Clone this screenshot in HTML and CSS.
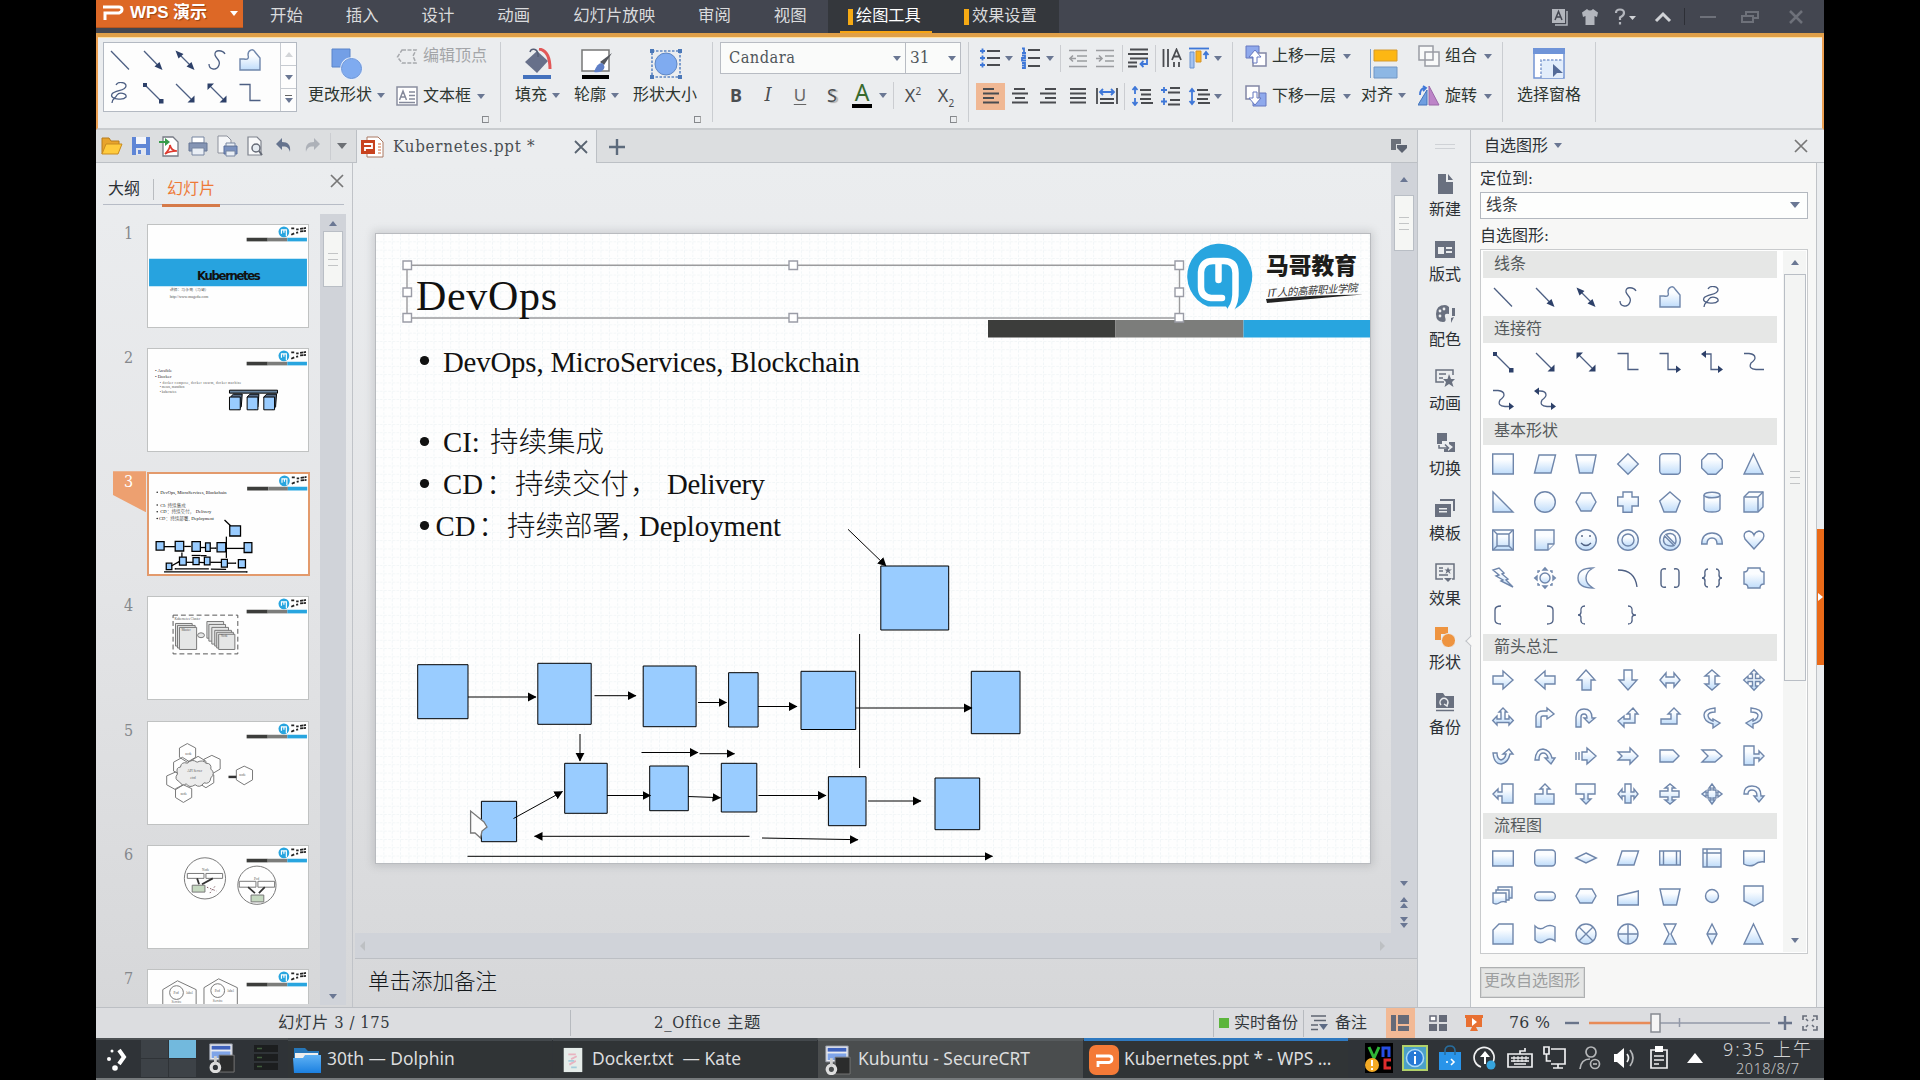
FILE: index.html
```html
<!DOCTYPE html>
<html lang="zh-CN">
<head>
<meta charset="utf-8">
<title>Kubernetes.ppt - WPS 演示</title>
<link rel="stylesheet" href="styles.css">
</head>
<body>
<svg class="defs" width="0" height="0">
  <defs>
    <linearGradient id="g" x1="0" y1="0" x2="0" y2="1"><stop offset=".3" stop-color="#fbfdff"/><stop offset="1" stop-color="#bfdcfa"/></linearGradient>
    <linearGradient id="folder" x1="0" y1="0" x2="0" y2="1"><stop offset="0" stop-color="#5fb2f5"/><stop offset="1" stop-color="#1b80e0"/></linearGradient>
    <marker id="ah" markerUnits="userSpaceOnUse" markerWidth="9" markerHeight="10" refX="8" refY="5" orient="auto"><path d="M0 .6L8.500 5L0 9.400Z" fill="#000" stroke="none"/></marker>
    <symbol id="line" viewBox="0 0 22 22"><path d="M2 2L20 20.500"/></symbol>
    <symbol id="arrow" viewBox="0 0 22 22"><path d="M2 2L18 18.500"/><path class="k" d="M20.500 21L12.500 17.500L17.500 13Z"/></symbol>
    <symbol id="darrow" viewBox="0 0 22 22"><path d="M4 4L18 18"/><path class="k" d="M20.500 21L12.500 17.500L17.500 13ZM1.500 1.500L9.500 5L4.500 9.500Z"/></symbol>
    <symbol id="curve" viewBox="0 0 22 22"><path d="M19 5C17 1 8 0 9 6C10 10 15 11 13 16C11 22 3 21 3 15"/></symbol>
    <symbol id="free" viewBox="0 0 22 22"><path class="f" d="M1 21V10H5C9 11 10 9 9 6C9 1 14 -1 16 3L21 9V21Z"/></symbol>
    <symbol id="scrib" viewBox="0 0 22 22"><path d="M7 3C9 -1 17 0 17 4C17 9 6 8 3 12C0 17 14 19 17 15C18 11 10 10 8 13C6 17 3 16 3 21"/></symbol>
    <symbol id="cline" viewBox="0 0 22 22"><path d="M3 3L19 19"/><path class="k" d="M1 1H5V5H1ZM17 17H21.500V21.500H17Z"/></symbol>
    <symbol id="carrow" viewBox="0 0 22 22"><path d="M2 2L18 18"/><path class="k" d="M20.500 20.500V13.500L13.500 20.500Z"/></symbol>
    <symbol id="cdarrow" viewBox="0 0 22 22"><path d="M3 3L18 18"/><path class="k" d="M20.500 20.500V13.500L13.500 20.500ZM1.500 1.500V8L8 1.500Z"/></symbol>
    <symbol id="elbow" viewBox="0 0 22 22"><path d="M.5 2.500H11V18.500H21.500"/></symbol>
    <symbol id="crt" viewBox="0 0 30 32"><path d="M3 1H27V18H3Z" fill="#e8eaf0" stroke="#8f94a0"/><path d="M5 3H25V7H5Z" fill="#3f62bd"/><path d="M5 9H25V16H5Z" fill="#7fa4e8"/><path d="M13 13H29V31H13Z" fill="#2b2c2c" stroke="#777"/><circle cx="9" cy="26" r="4.500" fill="none" stroke="#dedede" stroke-width="3.500"/><path d="M9 22V14" stroke="#cfcfcf" stroke-width="3"/></symbol>
    <symbol id="brand" viewBox="0 0 161 104"><circle cx="137.500" cy="7" r="5.500" fill="#28a5df"/><path d="M135 9V5H140V11.500M137.500 5.500V8" fill="none" stroke="#fff" stroke-width="1.200"/><path d="M145 3.500H148M150 4.500H152.500M154 4L160 3M145 10L148 8.500M150 8L152 7.500M154 6.500L160 6" stroke="#222" stroke-width="1.800" stroke-dasharray="3.500 .5"/><path d="M99.500 13H121V16.700H99.500Z" fill="#3c3d3b"/><path d="M121 13H141V16.700H121Z" fill="#7c7d7b"/><path d="M141 13H161V16.700H141Z" fill="#28a5df"/></symbol>
  </defs>
</svg>

<div class="app">
  <header class="titlebar">
    <div class="logo"><svg width="22" height="18" viewBox="0 0 22 18"><path d="M1 3H17Q20 3 20 5.500T17 9H3V16" fill="none" stroke="#fff" stroke-width="3"/></svg><b>WPS 演示</b><i class="dd white"></i></div>
    <nav class="menu"><span>开始</span><span>插入</span><span>设计</span><span>动画</span><span>幻灯片放映</span><span>审阅</span><span>视图</span></nav>
    <div class="context"><span class="on">绘图工具</span><span>效果设置</span></div>
    <div class="wintools">
      <svg width="18" height="18" viewBox="0 0 18 18"><path d="M1 1H14V15H1Z" fill="#b3b6bd"/><path d="M16 3V17H4" fill="none" stroke="#b3b6bd" stroke-width="1.500"/><path d="M4 12L7.500 3.500L11 12M5.300 9H9.700" fill="none" stroke="#434650" stroke-width="1.500"/></svg>
      <svg width="18" height="18" viewBox="0 0 18 18"><path d="M6 1Q9 4 12 1L17 4.500L16 9L13.500 8V17H4.500V8L2 9L1 4.500Z" fill="#b3b6bd"/></svg>
      <svg width="22" height="18" viewBox="0 0 22 18"><path d="M2 5Q2 1.500 6 1.500T10 5Q10 7.500 6 9.500V12M6 14V16.500" fill="none" stroke="#b3b6bd" stroke-width="2.200"/><path d="M15 8H22L18.500 12Z" fill="#d0d2d6"/></svg>
      <svg width="18" height="12" viewBox="0 0 18 12"><path d="M2 10L9 3L16 10" fill="none" stroke="#d0d2d6" stroke-width="3"/></svg>
      <i class="tsep"></i>
      <svg width="18" height="12" viewBox="0 0 18 12"><path d="M1 6H17" stroke="#6e717a" stroke-width="2"/></svg>
      <svg width="18" height="14" viewBox="0 0 18 14"><path d="M5 5V2H17V8H13M1 6H12V12H1Z" fill="none" stroke="#6e717a" stroke-width="2"/></svg>
      <svg width="16" height="14" viewBox="0 0 16 14"><path d="M2 1L14 13M14 1L2 13" stroke="#6e717a" stroke-width="2.500"/></svg>
    </div>
  </header>

  <section class="ribbon">
    <div class="group g1">
      <div class="gallery">
        <div class="cells">
          <svg class="ln"><use href="#line"/></svg><svg class="ln"><use href="#arrow"/></svg><svg class="ln"><use href="#darrow"/></svg><svg class="ln"><use href="#curve"/></svg><svg class="ln"><use href="#free"/></svg>
          <svg class="ln"><use href="#scrib"/></svg><svg class="ln"><use href="#cline"/></svg><svg class="ln"><use href="#carrow"/></svg><svg class="ln"><use href="#cdarrow"/></svg><svg class="ln"><use href="#elbow"/></svg>
        </div>
        <div class="spin"><span><i class="up pale"></i></span><span><i class="dd"></i></span><span><u></u><i class="dd"></i></span></div>
      </div>
      <div class="big change">
        <svg width="32" height="32" viewBox="0 0 32 32"><path d="M1 1H19V19H1Z" fill="#739fe6" stroke="#5a84c9"/><circle cx="20.500" cy="20.500" r="10.500" fill="#7fabf0" stroke="#e7effc" stroke-width="1.500"/><circle cx="20.500" cy="20.500" r="10" fill="none" stroke="#6691d6"/></svg>
        <div class="lbl">更改形状<i class="dd"></i></div>
      </div>
      <div class="stack s1">
        <div class="row off"><svg width="22" height="18" viewBox="0 0 22 18"><path d="M6 3H20L17 9L20 16H6L1.500 10Z" fill="none" stroke="#a7a9ad" stroke-width="1.500" stroke-dasharray="4 1.500"/></svg><span>编辑顶点</span></div>
        <div class="row"><svg width="22" height="20" viewBox="0 0 22 20"><path d="M1 1H21V19H1Z" fill="#fff" stroke="#8b8fa0" stroke-width="1.500"/><path d="M3.500 14L7 5L10.500 14M5 11H9M13 6H19M13 9.500H19M3 16.500H19M13 13H19" fill="none" stroke="#858a9b" stroke-width="1.500"/></svg><span>文本框</span><i class="dd"></i></div>
      </div>
      <i class="launch"></i>
    </div>
    <div class="group g2">
      <div class="big fill">
        <svg width="32" height="32" viewBox="0 0 32 32"><path d="M4 14L16 3L27 13L16 25Z" fill="#67708a"/><path d="M9 4C10 0 16 0 17 6V9" fill="none" stroke="#555e75" stroke-width="1.500"/><path d="M18 1C25 2 29 8 29 21" fill="none" stroke="#e25757" stroke-width="3"/><path d="M2 27H30V31H2Z" fill="#4472bd"/></svg>
        <div class="lbl">填充<i class="dd"></i></div>
      </div>
      <div class="big">
        <svg width="32" height="32" viewBox="0 0 32 32"><path d="M2 2H29V23H2Z" fill="#fff" stroke="#777" stroke-width="1.500"/><path d="M32 5L24 17L20 14Z" fill="#53565d"/><path d="M14 24Q17 15 22 15Q27 19 22 23Q18 25 14 24" fill="#5f7fc6"/><path d="M2 27H29V31H2Z" fill="#000"/></svg>
        <div class="lbl">轮廓<i class="dd"></i></div>
      </div>
      <div class="big size">
        <svg width="34" height="32" viewBox="0 0 34 32"><path d="M3 3H31V29H3Z" fill="none" stroke="#5f87c4" stroke-width="1.600" stroke-dasharray="2.500 1.500"/><circle cx="17" cy="16" r="11" fill="#7fabf0" stroke="#5f87c4"/><path d="M1 1H5V5H1ZM29 1H33V5H29ZM1 27H5V31H1ZM29 27H33V31H29Z" fill="#4b78b8"/></svg>
        <div class="lbl">形状大小</div>
      </div>
      <i class="launch"></i>
    </div>
    <div class="group g3">
      <div class="font">
        <div class="combo"><span class="name">Candara</span><i class="dd"></i><span class="pt">31</span><i class="dd"></i></div>
        <div class="marks">
          <b>B</b><em>I</em><u>U</u><span class="shadow">S</span><span class="color">A</span><i class="dd"></i><i class="vs"></i><span>X<sup>2</sup></span><span>X<sub>2</sub></span>
        </div>
      </div>
      <i class="launch"></i>
    </div>
    <div class="group g4">
      <div class="para p1">
        <svg width="20" height="20" viewBox="0 0 20 20"><path d="M7 3H20M7 10H20M7 17H20" class="tx"/><path d="M0 3H5M2.500 .5V5.500M0 10H5M2.500 7.500V12.500M0 17H5M2.500 14.500V19.500" class="bl"/></svg>
        <i class="dd"></i>
        <svg width="20" height="22" viewBox="0 0 20 22"><path d="M7 3H19M7 11H19M7 19H19" class="tx"/><path d="M1 1.500H3V6M1 6H5M1 8.500H4V11H1V13.500H5M1 16H4V21H1M1 18.500H4" class="bl"/></svg>
        <i class="dd"></i><i class="vs"></i>
        <svg width="18" height="19" viewBox="0 0 18 19"><path d="M0 1.500H18M8 7H18M8 12H18M0 17.500H18" class="gr"/><path d="M7 9.500H1M4 6.500L1 9.500L4 12.500" class="gr"/></svg>
        <svg width="18" height="19" viewBox="0 0 18 19"><path d="M0 1.500H18M9 7H18M9 12H18M0 17.500H18" class="gr"/><path d="M0 9.500H6M3 6.500L6 9.500L3 12.500" class="gr"/></svg>
        <i class="vs"></i>
        <svg width="20" height="20" viewBox="0 0 20 20"><path d="M2 1.500H20M0 6H20M2 10.500H20M0 14.500H9M0 18.500H9" class="tx"/><path d="M19 11V16H13M15.500 13L12.500 16L15.500 19" class="bl"/></svg>
        <i class="vs"></i>
        <svg width="20" height="20" viewBox="0 0 20 20"><path d="M1.500 1V19M6 1V19M12 14V19M17 14V19" class="tx"/><path d="M10 12L14.500 1.500L19 12M11.500 8.500H17.500" class="tx"/></svg>
        <svg width="22" height="22" viewBox="0 0 22 22"><path d="M1 1.500H21" class="bl"/><path d="M2 5H6V21H2Z" fill="#a5c3ef" stroke="#6b93cf"/><path d="M8 4H13V15H8Z" fill="#f9b320" stroke="#d5932a"/><path d="M18 12V5M15.500 8L18 5L20.500 8" class="bl"/></svg>
        <i class="dd"></i>
      </div>
      <div class="para p2">
        <span class="sel"><svg width="18" height="18" viewBox="0 0 18 18"><path d="M1 2H12M1 6.500H17M1 11H12M1 15.500H17" class="tx"/></svg></span>
        <svg width="18" height="18" viewBox="0 0 18 18"><path d="M3 2H14M1 6.500H17M4 11H14M1 15.500H17" class="tx"/></svg>
        <svg width="18" height="18" viewBox="0 0 18 18"><path d="M6 2H17M1 6.500H17M6 11H17M1 15.500H17" class="tx"/></svg>
        <svg width="18" height="18" viewBox="0 0 18 18"><path d="M1 2H17M1 6.500H17M1 11H17M1 15.500H17" class="tx"/></svg>
        <svg width="22" height="18" viewBox="0 0 22 18"><path d="M1 1V17M21 1V17M4 12H18M4 16H18" class="tx"/><path d="M4 5H18M7 2L4 5L7 8M15 2L18 5L15 8" class="bl"/></svg>
        <i class="vs"></i>
        <svg width="22" height="20" viewBox="0 0 22 20"><path d="M9 4H20M10 8.500H20M9 13H20M10 17H22" class="tx"/><path d="M4 1V8M1.500 4L4 1L6.500 4M4 12V19M1.500 16L4 19L6.500 16" class="bl"/></svg>
        <svg width="22" height="20" viewBox="0 0 22 20"><path d="M10 2H20M8 6.500H20M10 14H20M8 18.500H20" class="tx"/><path d="M1 4H7M4 1V7M1 15.500H7M4 12V19" class="bl"/></svg>
        <svg width="22" height="20" viewBox="0 0 22 20"><path d="M9 4H20M10 8.500H22M9 13H20M10 17H22" class="tx"/><path d="M4 3V18M1.500 6L4 3L6.500 6M1.500 15L4 18L6.500 15" class="bl"/></svg>
        <i class="dd"></i>
      </div>
    </div>
    <div class="group g5">
      <div class="stack s5">
        <div class="row"><svg width="22" height="22" viewBox="0 0 22 22"><path d="M1 1H14V13H1Z" fill="#8fa9ec" stroke="#6679c0"/><path d="M8 8H21V21H8Z" fill="#fff" stroke="#8287a5" stroke-width="1.500"/><path d="M8 18V12H4L10 5L16 12H12V18Z" fill="#fff" stroke="#6679c0"/></svg><span>上移一层</span><i class="dd"></i></div>
        <div class="row"><svg width="22" height="22" viewBox="0 0 22 22"><path d="M8 8H21V21H8Z" fill="#8fa9ec" stroke="#6679c0"/><path d="M1 1H14V14H1Z" fill="#fff" stroke="#8287a5" stroke-width="1.500"/><path d="M8 7V13H4L10 20L16 13H12V7Z" fill="#fff" stroke="#6679c0"/></svg><span>下移一层</span><i class="dd"></i></div>
      </div>
      <div class="big align">
        <svg width="30" height="32" viewBox="0 0 30 32"><path d="M1.500 1V30" stroke="#7ba0ce"/><path d="M5 2H28V13H5Z" fill="#fdb713" stroke="#d49a31"/><path d="M5 19H28V30H5Z" fill="#8db7e4" stroke="#7096c5"/></svg>
        <div class="lbl">对齐<i class="dd"></i></div>
      </div>
      <div class="stack s6">
        <div class="row"><svg width="22" height="22" viewBox="0 0 22 22"><path d="M1 1H15V15H1ZM7 7H21V21H7Z" fill="#fff" fill-opacity=".7" stroke="#999ca4" stroke-width="1.500"/></svg><span>组合</span><i class="dd"></i></div>
        <div class="row"><svg width="22" height="22" viewBox="0 0 22 22"><path d="M0 20H9V5Z" fill="#6f9ee0" stroke="#4475bb"/><path d="M11 20V1L21 20Z" fill="#bd84c8" stroke="#9b69a8"/><path d="M2 10Q2 3 7 3M5 1L8 3L5 6" class="bl"/></svg><span>旋转</span><i class="dd"></i></div>
      </div>
    </div>
    <div class="group g6">
      <div class="big pane">
        <svg width="32" height="32" viewBox="0 0 32 32"><path d="M1 1H31V30H1Z" fill="#fff" stroke="#7394d4" stroke-width="1.500"/><path d="M0 0H32V6H0Z" fill="#6f94d8"/><path d="M8 12H30V30H8Z" fill="#e2edfb"/><path d="M8 30V12H30" fill="none" stroke="#7f9bd0" stroke-width="1.500" stroke-dasharray="2.500 1.500"/><path d="M20 16V29L24 25H30Z" fill="#546b98"/></svg>
        <div class="lbl">选择窗格</div>
      </div>
    </div>
  </section>

  <div class="main">
    <div class="left-main">
      <div class="tabrow">
        <div class="qat">
          <svg width="22" height="20" viewBox="0 0 22 20"><path d="M1 18V2H8L10 5H18V8" fill="#e8a42c" stroke="#b77c1c"/><path d="M1 18L5 8H21L17 18Z" fill="#ffcb3d" stroke="#c98b20"/></svg>
          <svg width="20" height="20" viewBox="0 0 20 20"><path d="M1 1H19V19H1Z" fill="#5f86d6"/><path d="M5 1H15V8H5Z" fill="#f4f6fb"/><path d="M5 12H15V19H5Z" fill="#e2e6ef"/><path d="M7 14H10V18H7Z" fill="#5f86d6"/></svg>
          <svg width="20" height="22" viewBox="0 0 20 22"><path d="M4 2H14L19 7V21H4Z" fill="#fff" stroke="#777b85" stroke-width="1.300"/><path d="M0 6H6V3L11 7L6 11V8H0Z" fill="#369a49"/><path d="M6 19C10 15 11 13 11 10C12 15 15 16 18 16C13 16 9 17 6 19" fill="none" stroke="#de3b30" stroke-width="1.700"/></svg>
          <svg width="20" height="20" viewBox="0 0 20 20"><path d="M4 1H16V7H4Z" fill="#fff" stroke="#7785a0"/><path d="M1 7H19V15H1Z" fill="#8595b4" stroke="#667795"/><path d="M4 12H16V19H4Z" fill="#e9eef5" stroke="#7785a0"/></svg>
          <svg width="22" height="22" viewBox="0 0 22 22"><path d="M2 1H11L15 5V18H2Z" fill="#f5f6f8" stroke="#8d919c"/><path d="M8 11H21V19H8Z" fill="#7990be" stroke="#586f9c"/><path d="M10 8H19V11H10ZM10 16H19V21H10Z" fill="#e9eef5" stroke="#7785a0"/></svg>
          <svg width="20" height="22" viewBox="0 0 20 22"><path d="M3 2H12L16 6V20H3Z" fill="#f8f9fa" stroke="#7f838d" stroke-width="1.200"/><circle cx="11" cy="13" r="4" fill="#e6ecf2" stroke="#666b77" stroke-width="1.500"/><path d="M14 16L17 20" stroke="#666b77" stroke-width="2"/></svg>
          <svg width="16" height="16" viewBox="0 0 16 16"><path d="M6 0V4C12 4 15 7 14 14C13 10 11 8 6 8.500V12L0 6Z" fill="#65738e"/></svg>
          <svg width="16" height="16" viewBox="0 0 16 16"><path d="M10 0V4C4 4 1 7 2 14C3 10 5 8 10 8.500V12L16 6Z" fill="#adb1b8"/></svg>
          <i class="vs"></i><i class="dd gray"></i>
        </div>
        <div class="doctab">
          <svg width="23" height="22" viewBox="0 0 23 22"><path d="M6 1H17L22 6V21H6Z" fill="#fff" stroke="#aa7962"/><path d="M17 8H20M17 11H20M17 14H20M17 17H20" stroke="#cf6c40"/><path d="M0 4H14V18H0Z" fill="#c8421e"/><path d="M3 8H11V12H4V15" fill="none" stroke="#fff" stroke-width="1.800"/></svg>
          <span>Kubernetes.ppt *</span>
          <svg width="14" height="14" viewBox="0 0 14 14"><path d="M1 1L13 13M13 1L1 13" stroke="#596471" stroke-width="1.800"/></svg>
        </div>
        <svg class="plus" width="18" height="18" viewBox="0 0 18 18"><path d="M9 1V17M1 9H17" stroke="#5d6b7c" stroke-width="2.400"/></svg>
        <svg class="tablist" width="18" height="16" viewBox="0 0 18 16"><path d="M1 1H11V6H6V12H1Z" fill="#6b7079"/><path d="M7 7H17V10L12 15L7 10Z" fill="#5c6370"/></svg>
      </div>
      <div class="work">
        <aside class="slides">
          <div class="stabs"><span>大纲</span><i></i><span class="on">幻灯片</span><svg width="14" height="14" viewBox="0 0 14 14"><path d="M1 1L13 13M13 1L1 13" stroke="#777" stroke-width="1.700"/></svg></div>
          <div class="sbody">
            <ol class="thumbs">
              <li><span>1</span><svg class="th" viewBox="0 0 161 104"><use href="#brand"/><path d="M0 34.500H161V62.500H0Z" fill="#27a3df"/><text x="49" y="56.500" class="kt" textLength="65">Kubernetes</text><text x="21" y="67.500" class="t4">讲师：马永亮（马哥）</text><text x="21" y="74" class="t4">http://www.magedu.com</text></svg></li>
              <li><span>2</span><svg class="th" viewBox="0 0 161 104"><use href="#brand"/><text x="6" y="23" class="t5">• Ansible</text><text x="6" y="30" class="t5">• Docker</text><text x="11" y="35.500" class="t3" textLength="83">• docker compose, docker swarm, docker machine</text><text x="11" y="39.500" class="t3">• mesos, marathon</text><text x="11" y="45" class="t3">• kubernetes</text><path d="M82 42H131V45H82Z" fill="#68849f" stroke="#000"/><path d="M83 49L86 46H95L94 59L91 62ZM100 49L103 46H112L111 59L108 62ZM117 49L120 46H130L129 59L126 62Z" fill="#566b85" stroke="#000"/><path d="M82 49H93V62H82ZM100 49H111V62H100ZM117 49H128V62H117Z" fill="#99ccff" stroke="#000"/></svg></li>
              <li class="cur"><span>3</span><svg class="th" viewBox="376 234 994 629"><svg x="376" y="234" width="994" height="642" viewBox="0 0 161 104"><use href="#brand"/></svg><use href="#copy" y="-12"/><use href="#diagram" y="-6" stroke-width="8"/></svg></li>
              <li><span>4</span><svg class="th" viewBox="0 0 161 104"><use href="#brand"/><path d="M24.500 18.500H90.500V58H24.500Z" fill="none" stroke="#555" stroke-dasharray="5 3"/><g fill="#e5e6e6" stroke="#777"><path d="M27 27H44V50H27Z"/><path d="M29 29H47V52H29Z"/><path d="M31 31H48.500V53.500H31Z"/><path d="M59 25H76V42H59Z"/><path d="M61 28H78V45H61Z"/><path d="M64 31H81V48H64Z"/><path d="M67 34H84V50H67Z"/><path d="M69 36H86V52H69Z"/><path d="M71 38H87.500V53.500H71Z"/><ellipse cx="53" cy="39" rx="3.500" ry="2.500"/></g><text x="26" y="23.500" class="t3">Kubernetes Cluster</text><text x="33" y="35" class="t3">Master</text><text x="73" y="41" class="t3">Node</text></svg></li>
              <li><span>5</span><svg class="th" viewBox="0 0 161 104"><use href="#brand"/><g fill="#fff" stroke="#777"><path d="M39 22L47.500 26.500V36L39 41L31 36V26.500ZM64 34L72.500 38V48L64 53L56 48V38ZM34 36L42 41V50L34 55L25 50V41ZM27 51L35 55V64L27 69L18 64V55ZM59 50L66 54V62L58 67L50 62ZM35 64L43.500 68V77L35 82L27 77V68ZM97 45L105.500 49V59L97 64L89 59V49ZM50 35L58 40V46H42V40Z"/><path fill="#ececec" d="M31 61Q25 58 29 53Q27 46 32 46Q33 40 39 42Q44 37 49 41Q55 38 58 42Q64 42 63 48Q68 52 63 57Q62 64 56 62Q52 68 47 64Q41 68 38 63Q34 66 31 61Z"/></g><path d="M81 56H89" stroke="#333" stroke-width="2.500"/><text x="39" y="51" class="t3">API Server</text><text x="42" y="58" class="t3">etcd</text><text x="37" y="33.500" class="t3">node</text><text x="32" y="74" class="t3">node</text><text x="92" y="55" class="t3">node</text></svg></li>
              <li><span>6</span><svg class="th" viewBox="0 0 161 104"><use href="#brand"/><g fill="none" stroke="#777"><circle cx="57" cy="33" r="21"/><circle cx="110" cy="40" r="19.500"/><path d="M39 28H56V33H39ZM58 28H75V33H58ZM92 36H109V42H92ZM111 36H128V42H111Z"/><path fill="#c5d8c0" d="M44 40H57V47H44ZM104 50H117V57H104Z"/></g><path d="M49 33L51 39M65 33L54 39M101 42L108 48M118 42L112 48" stroke="#333" stroke-width="1.800"/><path d="M59 42L69 46M62 48L68 40" stroke="#7c5560" stroke-dasharray="1.500 2"/><text x="54" y="25" class="t3">Node</text><text x="107" y="35" class="t3">Pod</text></svg></li>
              <li><span>7</span><svg class="th" viewBox="0 0 161 104"><use href="#brand"/><g fill="none" stroke="#777"><path d="M14 60V20L29 11L48 20V60ZM56 60V18L71 9L90 18V60Z"/><circle cx="28" cy="23" r="7"/><circle cx="70" cy="21" r="7"/></g><text x="25" y="24" class="t3">Pod</text><text x="67" y="22" class="t3">Pod</text><text x="38" y="24" class="t3">label</text><text x="80" y="22" class="t3">label</text><text x="23" y="34" class="t3">Service</text><text x="65" y="33" class="t3">Service</text></svg></li>
            </ol>
            <div class="vbar sb1"><i class="up"></i><b class="thumb"><u></u></b><i class="dd"></i></div>
          </div>
        </aside>
        <section class="editor">
          <div class="canvas">
            <div class="stage">
              <svg class="slide" width="994" height="629" viewBox="376 234 994 629">
                <defs><pattern id="grid" x="376" y="234" width="8.350" height="8.300" patternUnits="userSpaceOnUse"><path d="M8 0V8.300M0 8H8.350" stroke="#edf2f5" stroke-width=".8" stroke-dasharray="2.500 1.500"/></pattern></defs>
                <rect x="376" y="234" width="994" height="629" fill="#fefefe"/><rect x="376" y="234" width="994" height="629" fill="url(#grid)"/>
                <path d="M988 320H1115.500V337.500H988Z" fill="#3c3d3b"/><path d="M1115.500 320H1243.500V337.500H1115.500Z" fill="#7c7d7b"/><path d="M1243.500 320H1370V337.500H1243.500Z" fill="#28a5df"/>
                <path d="M1208 306.500A32.500 32.500 0 1 1 1251 285Q1247 305 1229.500 311.500L1226 306.500Z" fill="#28a5df"/>
                <path d="M1222 298H1211Q1201 297 1201 287V272Q1202 261 1213 261H1224Q1235.500 261 1235.500 273V290Q1236 302 1231 309" fill="none" stroke="#fff" stroke-width="6.500" stroke-linecap="round"/><path d="M1218.500 262V280" stroke="#fff" stroke-width="6.500" stroke-linecap="round"/>
                <text x="1266" y="273.500" class="mage" textLength="91">马哥教育</text>
                <text x="1267" y="297" class="slogan" textLength="91" transform="rotate(-3.500 1267 297)">IT 人的高薪职业学院</text>
                <path d="M1266 299Q1310 295 1363 294.500Q1320 298 1267 303Z" fill="#222"/>
                <path d="M407 265.200H1179.500V318H407Z" fill="none" stroke="#9b9b9d" stroke-width="1.400"/>
                <g fill="#fff" stroke="#9a9ca6" stroke-width="1.400"><path d="M403 261H411.500V269.500H403ZM789 261H797.500V269.500H789ZM1175 261H1183.500V269.500H1175ZM403 288H411.500V296.500H403ZM1175 288H1183.500V296.500H1175ZM403 313.500H411.500V322H403ZM789 313.500H797.500V322H789ZM1175 313.500H1183.500V322H1175Z"/></g>
                <text x="416" y="309.500" class="title" textLength="141">DevOps</text>
                <g id="copy" class="copy">
                  <g><circle cx="424.500" cy="360.500" r="4.600"/><circle cx="424.500" cy="441.500" r="4.600"/><circle cx="424.500" cy="483.500" r="4.600"/><circle cx="424.500" cy="525.500" r="4.600"/></g>
                  <text x="443" y="372" textLength="417">DevOps, MicroServices, Blockchain</text>
                  <text y="452"><tspan x="443">CI:</tspan> <tspan x="490" class="zh">持续集成</tspan></text>
                  <text y="494"><tspan x="443">CD</tspan><tspan x="486" class="zh">：</tspan><tspan x="515" class="zh">持续交付</tspan><tspan x="630" class="zh">，</tspan> <tspan x="667" textLength="98">Delivery</tspan></text>
                  <text y="536"><tspan x="435.500">CD</tspan><tspan x="478" class="zh">：</tspan><tspan x="507" class="zh">持续部署</tspan><tspan x="622">, </tspan><tspan x="639" textLength="142">Deployment</tspan></text>
                </g>
                <g id="diagram">
                  <g fill="#99ccff" stroke="#000"><path d="M417.700 664.700H468V718.700H417.700ZM537.800 663.300H591.200V724.300H537.800ZM643.200 666H696.100V726.700H643.200ZM728.600 672.700H758.100V727H728.600ZM801 671.300H855.700V729.500H801ZM971.300 671.300H1020V733.700H971.300ZM880.800 566H948.700V630H880.800ZM564.700 763.300H607.200V813.300H564.700ZM649.700 766H688.300V810.700H649.700ZM721.300 763.300H756.800V812H721.300ZM828.400 776.700H866V825.700H828.400ZM935 778H979.700V829.700H935ZM481.400 801.300H516.600V841.700H481.400Z"/></g>
                  <path d="M859.600 634V768" stroke="#000"/>
                  <g fill="none" stroke="#000"><path marker-end="url(#ah)" d="M468 697H536"/><path marker-end="url(#ah)" d="M594.500 695.700H636"/><path marker-end="url(#ah)" d="M698 702.500H726.500"/><path marker-end="url(#ah)" d="M758 706.500H797"/><path marker-end="url(#ah)" d="M856 708H972"/><path marker-end="url(#ah)" d="M580 734V761"/><path marker-end="url(#ah)" d="M641.500 752.500H698"/><path marker-end="url(#ah)" d="M699.500 753.700H734.500"/><path marker-end="url(#ah)" d="M607 795.500H650.500"/><path marker-end="url(#ah)" d="M688 796.500L720.500 797.700"/><path marker-end="url(#ah)" d="M758.500 795.500H826"/><path marker-end="url(#ah)" d="M868 801H921"/><path marker-end="url(#ah)" d="M513.500 818.500L562.500 791.500"/><path marker-end="url(#ah)" d="M749.500 836.300H534.500"/><path marker-end="url(#ah)" d="M762 838L858 839.700"/><path marker-end="url(#ah)" d="M467.500 856.300H992.500"/><path marker-end="url(#ah)" d="M848 529.300L886 566"/></g>
                </g>
                <path d="M470.600 811V833H475L480.500 838L482 831L487 827L484 822Z" fill="#fdfdfd" stroke="#777" stroke-width="1.300"/>
              </svg>
            </div>
            <div class="vbar sb2"><i class="up"></i><b class="thumb"><u></u></b><i class="dd"></i><svg width="10" height="12" viewBox="0 0 10 12"><path d="M1 5L5 0L9 5ZM1 11L5 6L9 11Z" fill="#6a7793"/></svg><svg width="10" height="12" viewBox="0 0 10 12"><path d="M1 0L5 5L9 0ZM1 6L5 11L9 6Z" fill="#6a7793"/></svg></div>
          </div>
          <div class="hbar"><i class="lt"></i><i class="rt"></i></div>
          <div class="notes">单击添加备注</div>
        </section>
      </div>
    </div>

    <nav class="strip">
      <i class="grip"></i>
      <div><svg viewBox="0 0 20 20"><path d="M3 0H11V8H18V20H3ZM13 0L18 6H13Z"/></svg>新建</div>
      <div><svg viewBox="0 0 20 20"><path d="M0 2H20V19H0ZM3 8V15H9V8ZM11 8V10H17V8ZM11 12V14H17V12Z" fill-rule="evenodd"/></svg>版式</div>
      <div><svg viewBox="0 0 20 20"><path d="M10 1Q1 1 1 10Q1 18 8 18Q12 18 10 13Q9 9 14 10L14 3Q12 1 10 1Z"/><path d="M17 4H20V12H17ZM16 14L19 13L16 19Z"/><g fill="#ebedef"><circle cx="5" cy="7" r="1.400"/><circle cx="9" cy="5" r="1.400"/><circle cx="5" cy="12" r="1.400"/></g></svg>配色</div>
      <div><svg viewBox="0 0 20 20"><path d="M9 14H1V2H18V7M4 6H11M4 10H8" fill="none" stroke="#69707f" stroke-width="1.500"/><path d="M14 6L16 11H20L17 14L18.500 19L14 16L9.500 19L11 14L8 11H12.500Z"/></svg>动画</div>
      <div><svg viewBox="0 0 20 20"><path d="M2 0H12V8H7V11H2Z"/><path d="M14 9H20V19H9V16H13V18L18 14L14 11Z"/><path d="M4 12V15H13M10 11.500L13.500 15L10 18" fill="none" stroke="#69707f" stroke-width="1.500"/></svg>切换</div>
      <div><svg viewBox="0 0 20 20"><path d="M5 1H20V13H18V3H5ZM0 6H16V19H0ZM4 10V11.500H12V10ZM4 13V14.500H12V13Z" fill-rule="evenodd"/></svg>模板</div>
      <div><svg viewBox="0 0 20 20"><path d="M8 16H1V1H19V16H17M4 5H8M4 8H8M4 12H13" fill="none" stroke="#69707f" stroke-width="1.500"/><path d="M13 4L14 6.500H17L14.500 8L15.500 11L13 9L10.500 11L11.500 8L9.500 6.500H12ZM9 15H17L13 19Z"/></svg>效果</div>
      <div class="hot"><svg viewBox="0 0 20 20"><path d="M0 0H13V7H6V13H0Z"/><circle cx="13.500" cy="13.500" r="7" stroke="#ebedef"/></svg>形状</div>
      <div><svg viewBox="0 0 20 20"><path d="M1 1H8L10 4H19V16H1Z"/><path d="M1 18.500H19" stroke="#69707f" stroke-width="1.500"/><path d="M6 13A4 4 0 1 1 12 13M9 12L12 14L13 10" fill="none" stroke="#ebedef" stroke-width="1.500"/></svg>备份</div>
      <b class="notch"></b>
    </nav>

    <aside class="panel">
      <div class="phead"><span>自选图形</span><i class="dd"></i><svg width="14" height="14" viewBox="0 0 14 14"><path d="M1 1L13 13M13 1L1 13" stroke="#777" stroke-width="1.700"/></svg></div>
      <div class="pwrap">
        <div class="pbody">
          <label>定位到:</label>
          <div class="select">线条<i class="dd"></i></div>
          <label>自选图形:</label>
          <div class="list">
            <div class="cats">
              <h4>线条</h4>
              <div class="shapes"><svg class="ln"><use href="#line"/></svg><svg class="ln"><use href="#arrow"/></svg><svg class="ln"><use href="#darrow"/></svg><svg class="ln"><use href="#curve"/></svg><svg class="ln"><use href="#free"/></svg><svg class="ln"><use href="#scrib"/></svg></div>
              <h4>连接符</h4>
              <div class="shapes"><svg class="ln"><use href="#cline"/></svg><svg class="ln"><use href="#carrow"/></svg><svg class="ln"><use href="#cdarrow"/></svg><svg class="ln"><use href="#elbow"/></svg>
                <svg class="ln" viewBox="0 0 22 22"><path d="M.5 2.500H9V18.500H18"/><path class="k" d="M17 14.500L22 18.500L17 22Z"/></svg>
                <svg class="ln" viewBox="0 0 22 22"><path d="M3 3H10V18.500H18"/><path class="k" d="M17 14.500L22 18.500L17 22ZM5 -.5L0 3L5 7Z"/></svg>
                <svg class="ln" viewBox="0 0 22 22"><path d="M1 2.500H6Q12 3 12 7Q12 9 8 12Q5 18 13 18.500H21"/></svg>
                <svg class="ln" viewBox="0 0 22 22"><path d="M1 2.500H6Q12 3 12 7Q12 9 8 12Q5 18 13 18.500H18"/><path class="k" d="M17 14.500L22 18.500L17 22Z"/></svg>
                <svg class="ln" viewBox="0 0 22 22"><path d="M3 3H6Q12 3 12 7Q12 9 8 12Q5 18 13 18.500H18"/><path class="k" d="M17 14.500L22 18.500L17 22ZM5 -.5L0 3L5 7Z"/></svg></div>
              <h4>基本形状</h4>
              <div class="shapes">
                <svg class="sh"><path d="M.7 1H21.300V21H.7Z"/></svg>
                <svg class="sh"><path d="M5 2H21.500L17 20H.5Z"/></svg>
                <svg class="sh"><path d="M1 2H21L17.500 20H4.500Z"/></svg>
                <svg class="sh"><path d="M11 .7L21.300 11L11 21.300L.7 11Z"/></svg>
                <svg class="sh"><rect x=".7" y=".7" width="20.600" height="20.600" rx="3.500"/></svg>
                <svg class="sh"><path d="M7 .7H15L21.300 7V15L15 21.300H7L.7 15V7Z"/></svg>
                <svg class="sh"><path d="M10.500 1L20 21H1Z"/></svg>
                <svg class="sh"><path d="M1 1V21H21Z"/></svg>
                <svg class="sh"><circle cx="11" cy="11" r="10.300"/></svg>
                <svg class="sh"><path d="M6 2H16L21 11L16 20H6L1 11Z"/></svg>
                <svg class="sh"><path d="M6 1H15V6H21.300V15H15V21.300H6V15H.7V6H6Z"/></svg>
                <svg class="sh"><path d="M11 1L21.300 10L17 21H5L.7 10Z"/></svg>
                <svg class="sh"><path d="M3 4V18Q3 21 11 21T19 18V4"/><ellipse cx="11" cy="4" rx="8" ry="2.800"/></svg>
                <svg class="sh"><path d="M1 6L6 1H20V16L15 21H1Z"/><path d="M1 6H15V21M15 6L20 1"/></svg>
                <svg class="sh"><path d="M.7 1H21.300V21H.7Z"/><path d="M5 5H17V17H5ZM1 1L5 5M21 1L17 5M1 21L5 17M21 21L17 17"/></svg>
                <svg class="sh"><path d="M1 1H20V15L14 21H1Z"/><path d="M14 21V15H20"/></svg>
                <svg class="sh"><circle cx="11" cy="11" r="10.300"/><path d="M7 6V8M15 6V8M6 14Q11 19 16 14" class="n"/></svg>
                <svg class="sh"><circle cx="11" cy="11" r="10.300"/><circle cx="11" cy="11" r="6"/></svg>
                <svg class="sh"><circle cx="11" cy="11" r="10.300"/><path d="M7 5.500Q13 3 16 7Q18 12 16 15ZM5.500 7Q3 12 6.500 15.500Q11 18 15 16.500Z"/></svg>
                <svg class="sh"><path d="M.7 15Q1 4 11 4T21.300 15H16Q16 9 11 9T6 15Z"/></svg>
                <svg class="sh"><path d="M11 20L2 10Q-1 3 6 2Q10 3 11 6Q12 3 16 2Q23 3 20 10Z"/></svg>
                <svg class="sh"><path d="M7 1L12 6L10 7L16 12L14 13L21 20L9 14L11 13L4 9L7 8L1 3Z"/></svg>
                <svg class="sh"><circle cx="11" cy="11" r="5"/><path d="M9 3L11 .7L13 3ZM9 19L11 21.300L13 19ZM3 9L.7 11L3 13ZM19 9L21.300 11L19 13ZM4 6V4H6M16 4H18V6M18 16V18H16M6 18H4V16"/></svg>
                <svg class="sh"><path d="M18 1Q3 1 3 11T18 21Q11 17 11 11T18 1Z"/></svg>
                <svg class="ln" viewBox="0 0 22 22"><path d="M1 3Q18 3 20 20"/></svg>
                <svg class="sh"><path class="n" d="M7 2Q2 1 2 5V17Q2 21 7 20M15 2Q20 1 20 5V17Q20 21 15 20"/></svg>
                <svg class="sh"><path class="n" d="M7 2Q3 2 4 8Q4 11 1 11Q4 11 4 14Q3 20 7 20M15 2Q19 2 18 8Q18 11 21 11Q18 11 18 14Q19 20 15 20"/></svg>
                <svg class="sh"><path d="M5 1H17Q17 5 21 5V17Q17 17 17 21H5Q5 17 1 17V5Q5 5 5 1Z"/></svg>
                <svg class="ln" viewBox="0 0 22 22"><path d="M9 2Q3 2 3 6V16Q3 20 9 20"/></svg>
                <svg class="ln" viewBox="0 0 22 22"><path d="M13 2Q19 2 19 6V16Q19 20 13 20"/></svg>
                <svg class="ln" viewBox="0 0 22 22"><path d="M10 2Q5 2 6 8Q6 11 3 11Q6 11 6 14Q5 20 10 20"/></svg>
                <svg class="ln" viewBox="0 0 22 22"><path d="M11 2Q16 2 15 8Q15 11 19 11Q15 11 15 14Q16 20 11 20"/></svg>
              </div>
              <h4>箭头总汇</h4>
              <div class="shapes">
                <svg class="sh"><path d="M1 7H11V2L21 11L11 20V15H1Z"/></svg>
                <svg class="sh"><path d="M21 7H11V2L1 11L11 20V15H21Z"/></svg>
                <svg class="sh"><path d="M7 21V11H2L11 1L20 11H16V21Z"/></svg>
                <svg class="sh"><path d="M7 1V11H2L11 21L20 11H15V1Z"/></svg>
                <svg class="sh"><path d="M1 11L7 4V8H15V4L21 11L15 18V14H7V18Z"/></svg>
                <svg class="sh"><path d="M11 1L18 7H14V15H18L11 21L4 15H8V7H4Z"/></svg>
                <svg class="sh"><path d="M11 .7L15 5H12.500V9.500H17V7L21.300 11L17 15V12.500H12.500V17H15L11 21.300L7 17H9.500V12.500H5V15L.7 11L5 7V9.500H9.500V5H7Z"/></svg>
                <svg class="sh"><path d="M11 1L15 5H13V12H17V9L21.300 13.500L17 18V15.500H5V18L.7 13.500L5 9V12H9V5H7Z"/></svg>
                <svg class="sh"><path d="M2 20V9Q3 4 9 4H13V1L20 7L13 12V9H9Q7 9 7 11V20Z"/></svg>
                <svg class="sh"><path d="M1 20V10Q2 2 9 2Q17 2 17 11H20L14 16L9 11H12Q12 7 9 7Q6 7 6 10V20Z"/></svg>
                <svg class="sh"><path d="M16 1L21 7H18V16H7V20L1 14L7 9V12H13V7H10Z"/></svg>
                <svg class="sh"><path d="M15 1L21 7H18V17H2V12H12V7H9Z"/></svg>
                <svg class="sh"><path d="M14 1Q3 2 3 8Q3 15 12 17V21L19 16L12 12V14Q7 12 7 8Q8 5 14 5Z"/></svg>
                <svg class="sh"><path d="M8 1Q19 2 19 8Q19 15 10 17V21L3 16L10 12V14Q15 12 15 8Q14 5 8 5Z"/></svg>
                <svg class="sh"><path d="M1 8Q2 19 9 19Q16 18 18 9H21L17 4L11 9H14Q13 14 9 15Q5 14 5 8Z"/></svg>
                <svg class="sh"><path d="M1 15Q2 4 9 4Q16 5 18 13H21L17 19L11 13H14Q13 8 9 8Q5 8 5 15Z"/></svg>
                <svg class="sh"><path d="M7 7H12V3L21 11L12 19V15H7ZM1 7V15M4 7V15"/></svg>
                <svg class="sh"><path d="M1 7H13V3L21 11L13 19V15H1L5 11Z"/></svg>
                <svg class="sh"><path d="M1 5H14L20 11L14 17H1Z"/></svg>
                <svg class="sh"><path d="M1 5H14L21 11L14 17H1L7 11Z"/></svg>
                <svg class="sh"><path d="M1 1H11V9H16V6L21 11L16 16V13H11V20H1Z"/></svg>
                <svg class="sh"><path d="M21 1H10V9H6V6L1 11L6 16V13H10V20H21Z"/></svg>
                <svg class="sh"><path d="M1 21V11H9V6H6L11 1L16 6H13V11H20V21Z"/></svg>
                <svg class="sh"><path d="M1 1H20V11H13V16H16L11 21L6 16H9V11H1Z"/></svg>
                <svg class="sh"><path d="M8 1H14V9H17V6L21 11L17 16V13H14V20H8V13H5V16L1 11L5 6V9H8Z"/></svg>
                <svg class="sh"><path d="M1 8H9V5H6L11 1L16 5H13V8H20V14H13V17H16L11 21L6 17H9V14H1Z"/></svg>
                <svg class="sh"><path d="M11 1L14 5H12V7H15V10H17V8L21 11L17 14V12H15V15H12V17H14L11 21L8 17H10V15H7V12H5V14L1 11L5 8V10H7V7H10V5H8Z"/></svg>
                <svg class="sh"><path d="M1 11Q1 3 9 3Q18 3 18 13H21L16 19L11 13H14Q14 7 9 7Q5 7 5 11Z"/></svg>
              </div>
              <h4>流程图</h4>
              <div class="shapes">
                <svg class="sh"><path d="M.7 4H21.300V19H.7Z"/></svg>
                <svg class="sh"><rect x=".7" y="3" width="20.600" height="16" rx="3.500"/></svg>
                <svg class="sh"><path d="M11 6L21.300 11L11 16L.7 11Z"/></svg>
                <svg class="sh"><path d="M5 4H21.500L17 18H.5Z"/></svg>
                <svg class="sh"><path d="M.7 4H21.300V18H.7ZM4.500 4V18M17.500 4V18"/></svg>
                <svg class="sh"><path d="M2 2H20V20H2ZM6 2V20M2 6H20"/></svg>
                <svg class="sh"><path d="M.7 4H21.300V15Q16 14 11 18Q6 20 .7 17Z"/></svg>
                <svg class="sh"><path d="M6 2H20V13H6Z"/><path d="M4 5H17V15H4Z"/><path d="M1 8H14V17Q10 16 7 18Q4 20 1 18Z"/></svg>
                <svg class="sh"><rect x=".7" y="7" width="20.600" height="8.500" rx="4"/></svg>
                <svg class="sh"><path d="M5 4H17L21 11L17 18H5L1 11Z"/></svg>
                <svg class="sh"><path d="M.7 11L21.300 6V20H.7Z"/></svg>
                <svg class="sh"><path d="M1 4H21L17.500 20H4.500Z"/></svg>
                <svg class="sh"><circle cx="11" cy="11" r="6.500"/></svg>
                <svg class="sh"><path d="M1 1H20V16L11 21L1 16Z"/></svg>
                <svg class="sh"><path d="M7 1H21V21H1V7Z"/></svg>
                <svg class="sh"><path d="M1 3Q6 8 11 4Q16 1 21 4V18Q16 14 11 18Q6 22 1 17Z"/></svg>
                <svg class="sh"><circle cx="11" cy="11" r="10"/><path d="M4 4L18 18M18 4L4 18"/></svg>
                <svg class="sh"><circle cx="11" cy="11" r="10"/><path d="M1 11H21M11 1V21"/></svg>
                <svg class="sh"><path d="M5 1H17L12 11L17 21H5L10 11Z"/></svg>
                <svg class="sh"><path d="M11 1L16 11L11 21L6 11ZM6 11H16"/></svg>
                <svg class="sh"><path d="M10.500 1L20 21H1Z"/></svg>
              </div>
            </div>
            <div class="vbar sb3"><i class="up"></i><b class="thumb"><u></u></b><i class="dd"></i></div>
          </div>
          <div class="btn">更改自选图形</div>
        </div>
        <div class="edge"><i></i></div>
      </div>
    </aside>
  </div>

  <footer class="status">
    <span class="st1">幻灯片 3 / 175</span>
    <span class="st2">2_Office 主题</span>
    <span class="st3"><i class="green"></i>实时备份</span>
    <span class="st4"><svg width="18" height="18" viewBox="0 0 18 18"><path d="M1 2H16M4 6.500H16M1 11H8M1 15.500H8" stroke="#5f6672" stroke-width="1.600"/><path d="M9 10H18L13.500 16Z" fill="#5d6b85"/></svg>备注</span>
    <span class="views">
      <i class="vsel"><svg width="18" height="18" viewBox="0 0 18 18"><path d="M0 1H5V17H0ZM7 1H18V10H7ZM7 12H18V17H7Z" fill="#656a78"/></svg></i>
      <svg width="18" height="18" viewBox="0 0 18 18"><path d="M1 2H7V7H1Z" fill="#fff" stroke="#656a78" stroke-width="1.500"/><path d="M10 1H18V8H10ZM0 10H8V17H0ZM10 10H18V17H10Z" fill="#656a78"/></svg>
      <svg width="18" height="18" viewBox="0 0 18 18"><path d="M0 1H18V4H17V13H11L13 17H5L7 13H1V4H0Z" fill="#e87032"/><path d="M7 4L12 8L7 12Z" fill="#fff"/></svg>
    </span>
    <span class="pct">76 %</span>
    <svg class="zoom" width="272" height="24" viewBox="0 0 272 24"><path d="M10 12H24" stroke="#69748a" stroke-width="2.400"/><path d="M34 12H97" stroke="#e88b57" stroke-width="2.500"/><path d="M105 12H215M124.500 7V16" stroke="#9299a8" stroke-width="1.500"/><path d="M96 3H105V21H96Z" fill="#f5f5f5" stroke="#878b91" stroke-width="1.500"/><path d="M223 12H237M230 5V19" stroke="#69748a" stroke-width="2.400"/><path d="M248 9V5H252M258 5H262V9M262 15V19H258M252 19H248V15M251 8L253 10M259 8L257 10M251 16L253 14M259 16L257 14" fill="none" stroke="#666c78" stroke-width="1.600"/></svg>
  </footer>

  <footer class="taskbar">
    <svg class="kde" width="24" height="28" viewBox="0 0 24 28"><path d="M13 6L18 13L13 20" fill="none" stroke="#fff" stroke-width="4"/><circle cx="3" cy="15" r="2" fill="#fff"/><circle cx="6" cy="7" r="1.500" fill="#fff"/><circle cx="9" cy="24" r="2.800" fill="#fff"/></svg>
    <div class="pager"><i></i><i class="on"></i><i></i><i></i></div>
    <svg class="q1" width="30" height="30"><use href="#crt"/></svg>
    <svg class="q2" width="24" height="28" viewBox="0 0 24 28"><path d="M0 1H24V8H0ZM0 10H24V17H0ZM0 19H24V26H0Z" fill="#1c1e1f"/><path d="M3 4.500H8M3 13.500H8M3 22.500H8" stroke="#3f5b3b" stroke-width="1.500"/></svg>
    <div class="task"><svg width="28" height="28" viewBox="0 0 28 28"><path d="M1 2H12L15 5H26V12H1Z" fill="#2676b8"/><path d="M2 7H25V12H2Z" fill="#eee"/><path d="M0 12H10L12 9H28V27H1Z" fill="url(#folder)"/></svg><span>30th — Dolphin</span></div>
    <div class="task kate"><svg width="20" height="26" viewBox="0 0 20 28"><path d="M0 1H20V27H0Z" fill="#e5ece9"/><path d="M5 8H13M8 13L14 10M6 19L13 15" stroke="#e9b3c0" stroke-width="2"/><path d="M5 15H11M8 22H14" stroke="#a5cddb" stroke-width="2"/></svg><span>Docker.txt &nbsp;— Kate</span></div>
    <div class="task act"><svg width="28" height="30"><use href="#crt"/></svg><span>Kubuntu - SecureCRT</span></div>
    <div class="task wps"><svg width="30" height="30" viewBox="0 0 30 30"><rect width="30" height="30" rx="7" fill="#f47a37"/><path d="M7 11H20Q23 11 23 14T20 17.500H9V22" fill="none" stroke="#fff" stroke-width="2.800"/></svg><span>Kubernetes.ppt * - WPS ...</span></div>
    <div class="tray">
      <svg width="28" height="30" viewBox="0 0 28 30"><path d="M0 0H28V30H0Z" fill="#000"/><path d="M4 4L9 15L14 4" fill="none" stroke="#2eb637" stroke-width="3"/><path d="M18 14V5H24V14" fill="none" stroke="#264ee2" stroke-width="3"/><path d="M26 17H20V25H26" fill="none" stroke="#df2d2d" stroke-width="3"/><circle cx="7" cy="22" r="7" fill="#f4ab26"/><path d="M7 17V23M7 25V27" stroke="#fff" stroke-width="2"/></svg>
      <svg width="26" height="26" viewBox="0 0 26 26"><path d="M1 1H25V25H1Z" fill="#4ba0c8" stroke="#b1d16a" stroke-width="2"/><circle cx="13" cy="13" r="8.500" fill="#2679d6" stroke="#a8d8f8" stroke-width="1.500"/><path d="M13 7V9M13 11V19" stroke="#fff" stroke-width="2"/></svg>
      <svg width="24" height="26" viewBox="0 0 24 26"><path d="M1 7H23V25H1Z" fill="#2994e9"/><path d="M7 10V6Q7 1 12 1T17 6V10" fill="none" stroke="#286d9d" stroke-width="1.600"/><path d="M13 14L16 17L13 20" fill="none" stroke="#fff" stroke-width="1.600"/><circle cx="9" cy="17" r="1" fill="#fff"/></svg>
      <svg width="24" height="26" viewBox="0 0 24 26"><path d="M8 22A10 10 0 1 1 20 17" class="wl"/><path d="M11 19V12H7L12 6L17 12H13V19Z" fill="#fff"/><circle cx="18" cy="20" r="4.500" fill="#36a4dd"/></svg>
      <svg width="26" height="22" viewBox="0 0 26 22"><path d="M1 7H25V20H1ZM4 11H22M4 14H22M7 17H19M13 7V4H18V1" class="wl"/><path d="M7 9V15M11 9V15M15 9V15M19 9V15" stroke="#eff0f1"/></svg>
      <svg width="24" height="24" viewBox="0 0 24 24"><path d="M8 3H22V18H8M15 18V22M10 22H20M1 1H6V8H1ZM3.500 8V15H8" class="wl"/></svg>
      <svg width="22" height="24" viewBox="0 0 22 24"><circle cx="12" cy="6" r="5" class="wl dim"/><path d="M1 23Q2 13 11 13" class="wl dim"/><circle cx="16" cy="18" r="4.500" class="wl dim"/><path d="M14 18H18" class="wl dim"/></svg>
      <svg width="22" height="24" viewBox="0 0 22 24"><path d="M1 8H4L11 2V22L4 16H1Z" fill="#fff"/><path d="M14 8Q17 12 14 16" class="wl"/><path d="M17 4Q23 12 17 20" class="wl dim"/></svg>
      <svg width="20" height="24" viewBox="0 0 20 24"><path d="M2 4H18V22H2ZM5 10H15M5 14H15M5 18H10" class="wl"/><path d="M6 0H14V6H6Z" fill="#fff"/></svg>
      <svg width="16" height="10" viewBox="0 0 16 10"><path d="M0 10L8 0L16 10Z" fill="#fff"/></svg>
    </div>
    <div class="clock"><svg width="92" height="38" viewBox="0 0 92 38"><text x="2" y="16.500" class="ctime" textLength="88">9:35 上午</text><text x="15" y="34.500" class="cdate" textLength="63">2018/8/7</text></svg></div>
  </footer>
</div>
</body>
</html>
```
FILE: styles.css
```css
*{box-sizing:border-box}
html,body{margin:0;height:100%;background:#000;overflow:hidden}
body{font-family:"DejaVu Serif Condensed","DejaVu Serif","Noto Sans CJK SC",serif;font-size:16px;color:#2c3136;line-height:1}
svg{display:block;flex:none}
i{font-style:normal}
.defs{position:absolute}
.app{width:1728px;height:1080px;margin-left:96px;display:flex;flex-direction:column;background:#ebedef}

.dd,.up{display:block;flex:none;width:0;height:0;border:4.5px solid transparent;border-bottom:0;border-top:5px solid #6a7793}
.up{border-top:0;border-bottom:5px solid #6a7793}
.dd.white{border-top-color:#fff}
.dd.gray{border-width:6px 5px 0;border-top-color:#6c6f74}
.up.pale{border-bottom-color:#d3d5d8}
.vs{display:block;width:1px;height:27px;background:#cbcdd1}

/* title bar */
.titlebar{height:33px;flex:none;display:flex;background:#434650;color:#dadbdd}
.logo{width:147px;height:28px;background:#dd6826;color:#fff;display:flex;align-items:center;padding:0 5px 1px 6px;border-bottom:1px solid #b7571f}
.logo b{font:bold 17px/22px "Liberation Sans","Noto Sans CJK SC",sans-serif;margin-left:6px;flex:1;text-shadow:1px 1px 1px #9a4414;white-space:nowrap;letter-spacing:-.1px}
.logo .dd{border-width:5px 4px 0}
.menu{display:flex;gap:43px;padding:8px 0 0 27px;width:585px;font-size:16.4px;white-space:nowrap}
.context{display:flex;width:231px;height:33px;flex:none;background:#34373c;padding-left:12px}
.context span{width:92px;height:33px;padding:8px 0 0 16px;margin-right:24px;font-size:16.2px;position:relative;white-space:nowrap}
.context span::before{content:"";position:absolute;left:8px;top:9px;width:5px;height:16px;background:#f6aa14}
.context .on{color:#fff;border-bottom:2px solid #f6a414}
.context span + span{margin:0}
.wintools{display:grid;grid-template-columns:28px 32px 38px 38px 4px 44px 40px 51px;margin-left:487px;justify-items:center;align-items:center;height:33px}
.tsep{width:1px;height:17px;background:#2d2f36}

/* ribbon */
.ribbon{height:97px;flex:none;display:flex;border-top:4px solid #df9f48;border-left:2px solid #eca052;border-right:2px solid #eca052;border-bottom:2px solid #c9cccf;background:#ebedef;box-shadow:inset 0 1px #ffe2a6;color:#2c3530}
.group{position:relative;display:flex;flex:none}
.group::after{content:"";position:absolute;right:0;top:5px;width:1px;height:80px;background:#cacdd1}
.g1{width:403px}.g2{width:212px}.g3{width:256px}.g4{width:264px}.g5{width:270px}.g6{width:93px}
.launch{position:absolute;right:12px;bottom:5px;width:7px;height:7px;border:1.5px solid #85888c;border-right-color:#aaa}
.gallery{display:flex;width:194px;height:70px;margin:5px 0 0 5px;border:1px solid #b3b9c2;background:#fdfdfd}
.cells{display:grid;grid-template-columns:repeat(5,32.4px);grid-auto-rows:33px;place-items:center;width:176px;padding-top:0}
.spin{flex:1;border-left:1px solid #c7cbd1}
.spin span{display:flex;flex-direction:column;gap:2px;height:23px;align-items:center;justify-content:center;border-bottom:1px solid #c7cbd1}
.spin span:last-child{border:0;height:20px}
.spin u{width:7px;height:1px;background:#666}
.ln,.sh{width:22px;height:22px;overflow:visible}
.ln{fill:none;stroke:#4d5f83;stroke-width:1.3}
.k{fill:#2d4069;stroke:none}
.f,.sh{fill:url(#g);stroke:#6f86ab;stroke-width:1.4}
.sh .n{fill:none;stroke:#4f6183}
.big{display:flex;flex-direction:column;padding-top:11px;white-space:nowrap}
.lbl{display:flex;align-items:center;height:30px;gap:5px}
.big svg{margin-left:6px}
.change{margin-left:11px}.change svg{margin-left:23px}
.stack{padding-top:4px;white-space:nowrap}
.row{display:flex;align-items:center;height:30px;gap:5px}
.row + .row{margin-top:10px}
.off{color:#a3a5a8}
.s1{margin-left:11px}
.s1 .row .dd{margin-left:1px}
.fill{margin-left:14px}.fill + .big{margin-left:14px}
.size{margin-left:14px}.size svg{margin-left:16px}
.font{margin:5px 0 0 7px}
.combo{display:flex;align-items:center;width:241px;height:32px;border:1px solid #b8bcc3;background:#fafbfa;color:#50565a}
.combo .name{width:172px;padding-left:8px;font-size:16.3px;letter-spacing:.45px}
.combo .pt{border-left:1px solid #b8bcc3;height:30px;line-height:29px;margin-left:4px;padding-left:4px;width:43px;font-size:17px}
.marks{display:grid;grid-template-columns:32px 32px 32px 32px 28px 14px 6px 34px 32px;justify-items:center;align-items:center;height:42px;font:18px/24px "Noto Sans",sans-serif;color:#4b4e51}
.marks em{font-family:"DejaVu Serif",serif}
.marks u{color:#666;font-size:17px;text-underline-offset:3px}
.shadow{text-shadow:2px 1px 1px #aaa}
.color{width:20px;height:26px;line-height:20px;font-size:23px;text-align:center;color:#376a2e;border-bottom:4px solid #000}
.marks sup,.marks sub{font-size:10px;line-height:0}
.para{position:absolute;left:7px;display:grid;place-items:center;height:28px}
.p1{top:7px;grid-template-columns:28px 10px 34px 4px 16px 20px 34px 0 32px 2px 31px 24px 14px}
.p2{top:45px;grid-template-columns:29px 29px 28px 31px 28px 6px 29px 29px 28px 10px}
.sel{display:grid;place-items:center;width:29px;height:27px;background:#f0b894}
.tx{fill:none;stroke:#4a4c50;stroke-width:1.8}
.bl{fill:none;stroke:#3e77d8;stroke-width:1.8}
.gr{fill:none;stroke:#9b9da0;stroke-width:1.6}
.s5{margin-left:12px}
.s5 .row .dd,.s6 .row .dd{margin-left:2px}
.align{margin-left:10px}.align svg{margin-left:8px}
.s6{margin-left:12px}
.pane{margin-left:14px}.pane svg{margin-left:16px}

/* document area */
.main{height:877px;flex:none;display:flex}
.left-main{width:1321px;display:flex;flex-direction:column;background:linear-gradient(#ebedef 34px,#e4e5e7 50%,#d6d7d9 100%)}
.tabrow{display:flex;align-items:center;height:33px;background:#dcdee0;border-bottom:1px solid #bcc0c5}
.qat{display:grid;grid-template-columns:repeat(8,28.6px) 7px 17px;width:261px;height:33px;padding-left:2px;place-items:center;border-right:1px solid #bcc0c5;flex:none}
.doctab{display:flex;align-items:center;width:240px;height:33px;background:#ebedef;border-right:1px solid #bcc0c5;padding:0 8px 0 4px;margin-bottom:-1px;flex:none}
.doctab span{flex:1;margin-left:9px;font-size:16.8px;letter-spacing:.75px;color:#4a4f53;white-space:nowrap}
.plus{margin:1px 0 0 11px}
.tablist{margin-left:auto;margin-right:9px}
.work{display:flex;flex:1;min-height:0}
.slides{width:257px;border-right:1px solid #c0c3c8;display:flex;flex-direction:column;flex:none}
.stabs{display:flex;margin:8px 8px 0 7px;height:34px;border-bottom:1px solid #b7bcc6;padding:10px 0 0 5px;flex:none}
.stabs i{width:1px;height:21px;background:#b9bcc0;margin:-2px 8px 0 13px}
.stabs .on{color:#ee7a37;padding:0 5px;height:26px;border-bottom:3px solid #d57a49}
.stabs svg{margin:-7px 0 0 auto}
.sbody{display:flex;flex:1;min-height:0;padding-top:9px;justify-content:space-between}
.thumbs{list-style:none;margin:0;padding:10px 0 0 28px;height:790px;overflow:hidden;width:218px;flex:none}
.thumbs li{display:flex;height:124.15px;position:relative}
.thumbs span{box-sizing:content-box;width:10px;padding:2px 13px 0 0;color:#85888c}
.th{width:162px;height:104px;background:#fefefe;border:1px solid #c0c2c2;overflow:hidden}
.thumbs .cur::before{content:"";position:absolute;left:-11px;top:-1px;width:33px;height:41px;background:#eda070;clip-path:polygon(0 0,100% 0,100% 100%,0 58%)}
.cur span{position:relative;color:#fff}
.cur .th{outline:1.5px solid #e39a6c;border-color:#e39a6c;width:161px;height:102px;margin:1px 0 0 .5px}
.kt{font:bold 12px "DejaVu Sans",sans-serif;fill:#111}
.t5{font:4.8px "Liberation Serif","Noto Sans CJK SC",serif;fill:#333}
.t4{font:4px "Liberation Serif","Noto Sans CJK SC",serif;fill:#555}
.t3{font:3.4px "Liberation Serif",serif;fill:#555}
.vbar{background:#d0d3d9;display:flex;flex-direction:column;align-items:center;flex:none}
.vbar .thumb{display:grid;place-items:center;background:#f5f6f4;border:1px solid #b9bec5}
.vbar u{display:block;width:10px;height:13px;border:solid #c3c5c6;border-width:1px 0;background:linear-gradient(transparent 5px,#c3c5c6 5px,#c3c5c6 6px,transparent 6px)}
.sb1{width:26px;height:791px;margin-right:6px}
.sb1 .up{margin-top:7px}
.sb1 .thumb{width:20px;height:56px;margin-top:5px;margin-bottom:auto}
.sb1 .dd{margin-bottom:6px}
.editor{flex:1;display:flex;flex-direction:column;min-width:0}
.canvas{display:flex;height:770px;justify-content:space-between;flex:none}
.stage{padding:71px 0 0 23px}
.slide{box-shadow:0 0 0 1px #b9bbbf,0 0 8px 3px rgba(90,95,100,.22)}
.sb2{width:26px;height:770px}
.sb2 .up{margin-top:14px}
.sb2 .thumb{width:20px;height:56px;margin-top:13px;margin-bottom:auto}
.sb2 .dd{margin-bottom:11px}
.sb2 svg{margin-bottom:8px}
.sb2 svg:last-child{margin-bottom:4px}
.hbar{display:flex;justify-content:space-between;align-items:center;height:26px;flex:none;background:#d0d3d9;border-bottom:1px solid #bcbfc4;margin-left:2px;padding:0 32px 0 5px}
.lt,.rt{border:5px solid transparent;border-left:0;border-right:5px solid #bdc0c3}
.rt{border-right:0;border-left:5px solid #bdc0c3}
.notes{padding:10px 0 0 15px;font-size:21.5px;font-weight:300;font-family:"Noto Sans CJK SC",sans-serif;line-height:22px;color:#14181b}

.title{font:42px "Liberation Serif",serif;fill:#111}
.copy{font:28.8px "Liberation Serif",serif;fill:#111}
.zh{font-family:"Noto Sans CJK SC",sans-serif;font-weight:300;font-size:28.5px}
.mage{font:900 22.7px "Noto Sans CJK SC",sans-serif;fill:#1d1d1b}
.slogan{font:italic 10.5px "Noto Sans CJK SC",sans-serif;fill:#333}

/* task strip */
.strip{width:54px;border:solid #bfc3c8;border-width:0 1px;display:flex;flex-direction:column;align-items:center;position:relative;flex:none;padding-left:2px}
.strip div{height:64.75px;display:flex;flex-direction:column;align-items:center;gap:8px;flex:none;color:#2b3035}
.strip div svg{width:20px;height:20px;fill:#69707f}
.grip{width:20px;height:5px;margin:14px 0 25px;border:solid #cfd2d6;border-width:1px 0;flex:none}
.strip .hot svg{fill:#ee9440}
.notch{position:absolute;right:-5px;top:507px;width:8px;height:8px;background:#f7f7f6;border:1px solid #bfc3c8;border-width:0 0 1px 1px;transform:rotate(45deg)}

/* shapes panel */
.panel{width:353px;display:flex;flex-direction:column}
.phead{display:flex;align-items:center;gap:6px;height:33px;padding:0 16px 1px 13px;border-bottom:1px solid #bcc0c5;flex:none}
.phead svg{margin-left:auto}
.pwrap{display:flex;flex:1;min-height:0}
.pbody{width:346px;background:#f7f7f6;border-right:1px solid #c0c3c7;padding:0 8px 0 9px;display:flex;flex-direction:column}
.pbody label{height:29px;padding-top:8px;font-size:16px}
.select{display:flex;justify-content:space-between;align-items:center;height:27px;border:1px solid #b3b8bf;background:#fdfefd;padding:0 7px 2px 5px;color:#3d4246;margin-bottom:1px;flex:none}
.select .dd{border-width:6px 5.5px 0}
.list{display:flex;height:705px;border:1px solid #c9cbcd;background:#fefefe;justify-content:space-between;padding:1px 1px 0 2px;flex:none}
.cats{width:294px}
.cats h4{margin:0;height:26.9px;background:#e6e7e6;font-weight:400;font-size:16px;padding:5px 0 0 11px;color:#555a5c}
.shapes{display:grid;grid-template-columns:repeat(7,41.8px);grid-auto-rows:37.83px;place-items:center;margin-left:-1px}
.sb3{width:23px;background:#f4f5f4;height:701px}
.sb3 .up{margin-top:9px}
.sb3 .thumb{width:22px;height:407px;margin-top:9px;margin-bottom:auto;background:#f3f4f3}
.sb3 .dd{margin-bottom:9px}
.btn{width:105px;height:31px;margin-top:13px;border:1px solid #aeb0b1;background:#e4e5e4;color:#9d9fa0;padding:5px 0 0 3px;white-space:nowrap;outline:1px solid #d5d6d6;outline-offset:-2px}
.edge{width:7px;padding-top:366px}
.edge i{display:flex;align-items:center;height:136px;background:#ea6a18}
.edge i::before{content:"";border:4px solid transparent;border-left:5px solid #fff;border-right:0;margin-left:1px}

/* status bar */
.status{height:31px;flex:none;display:flex;align-items:center;background:#dcdde0;border-top:1px solid #bcbfc4;font-size:16px;color:#33383c;white-space:nowrap}
.st1{padding-left:182px;width:475px;height:26px;line-height:26px;border-right:1px solid #b7babf;font-size:16.4px;letter-spacing:.6px;flex:none}
.st2{padding-left:83px;width:642px;flex:none;font-size:16.4px;letter-spacing:.75px}
.st3{display:flex;align-items:center;width:91px;height:27px;border:solid #b7babf;border-width:0 1px;padding-left:5px;flex:none}
.green{width:10px;height:10px;background:#5cb53c;margin-right:5px}
.st4{display:flex;align-items:center;gap:7px;width:82px;padding-left:6px;flex:none}
.views{display:grid;grid-template-columns:29px 45px 31px;align-items:center;justify-items:center;flex:none;width:110px}
.views svg:last-child{justify-self:start;margin-left:5px}
.vsel{display:grid;place-items:center;width:29px;height:30px;background:#f2b995}
.pct{margin-left:13px;width:43px;flex:none;font-size:17.5px;letter-spacing:.3px}
.zoom{margin-left:3px}

/* desktop panel */
.taskbar{height:42px;flex:none;display:flex;background:#2f3337;border-bottom:2px solid #767a7c;box-shadow:inset 0 2px #4b4f52;font-family:"Noto Sans",sans-serif;font-size:17.4px;color:#dcddde;align-items:center;white-space:nowrap}
.kde{margin-left:10px}
.pager{display:grid;grid-template-columns:27px 27px;grid-template-rows:18px 18px;gap:1px;margin-left:11px}
.pager i{background:#3d4247}
.pager .on{background:#72b9dd}
.q1{margin-left:10px}
.q2{margin-left:18px}
.task{display:flex;align-items:center;width:264px;height:40px;padding-left:5px;border-top:3px solid #43484c;margin-left:1px;background:#303436;flex:none}
.q2 + .task{margin-left:10px}
.task span{margin:-2px 0 0 6px}
.kate{padding-left:10px}
.kate span{margin-left:9px}
.act{background:#4a4d4e;border-top-color:#575b5d;width:265px}
.act span{margin-left:7px}
.wps{border-top-color:#2f79c0;padding-left:5px;width:264px}
.wps span{font-size:17.3px;letter-spacing:-.05px;margin-left:5px}
.tray{display:grid;grid-template-columns:36px 35px 35px 35px 35px 35px 35px 34px 36px 35px;place-items:center;margin-left:13px;flex:none}
.wl{fill:none;stroke:#eff0f1;stroke-width:1.7}
.dim{stroke:#b5b7b9}
.clock{margin-left:9px}
.clock svg{overflow:visible}
.ctime{font:300 18px "Noto Sans","Noto Sans CJK SC",sans-serif;fill:#d3d4d5}
.cdate{font:300 14.5px "Noto Sans",sans-serif;fill:#c4c5c6}
```
